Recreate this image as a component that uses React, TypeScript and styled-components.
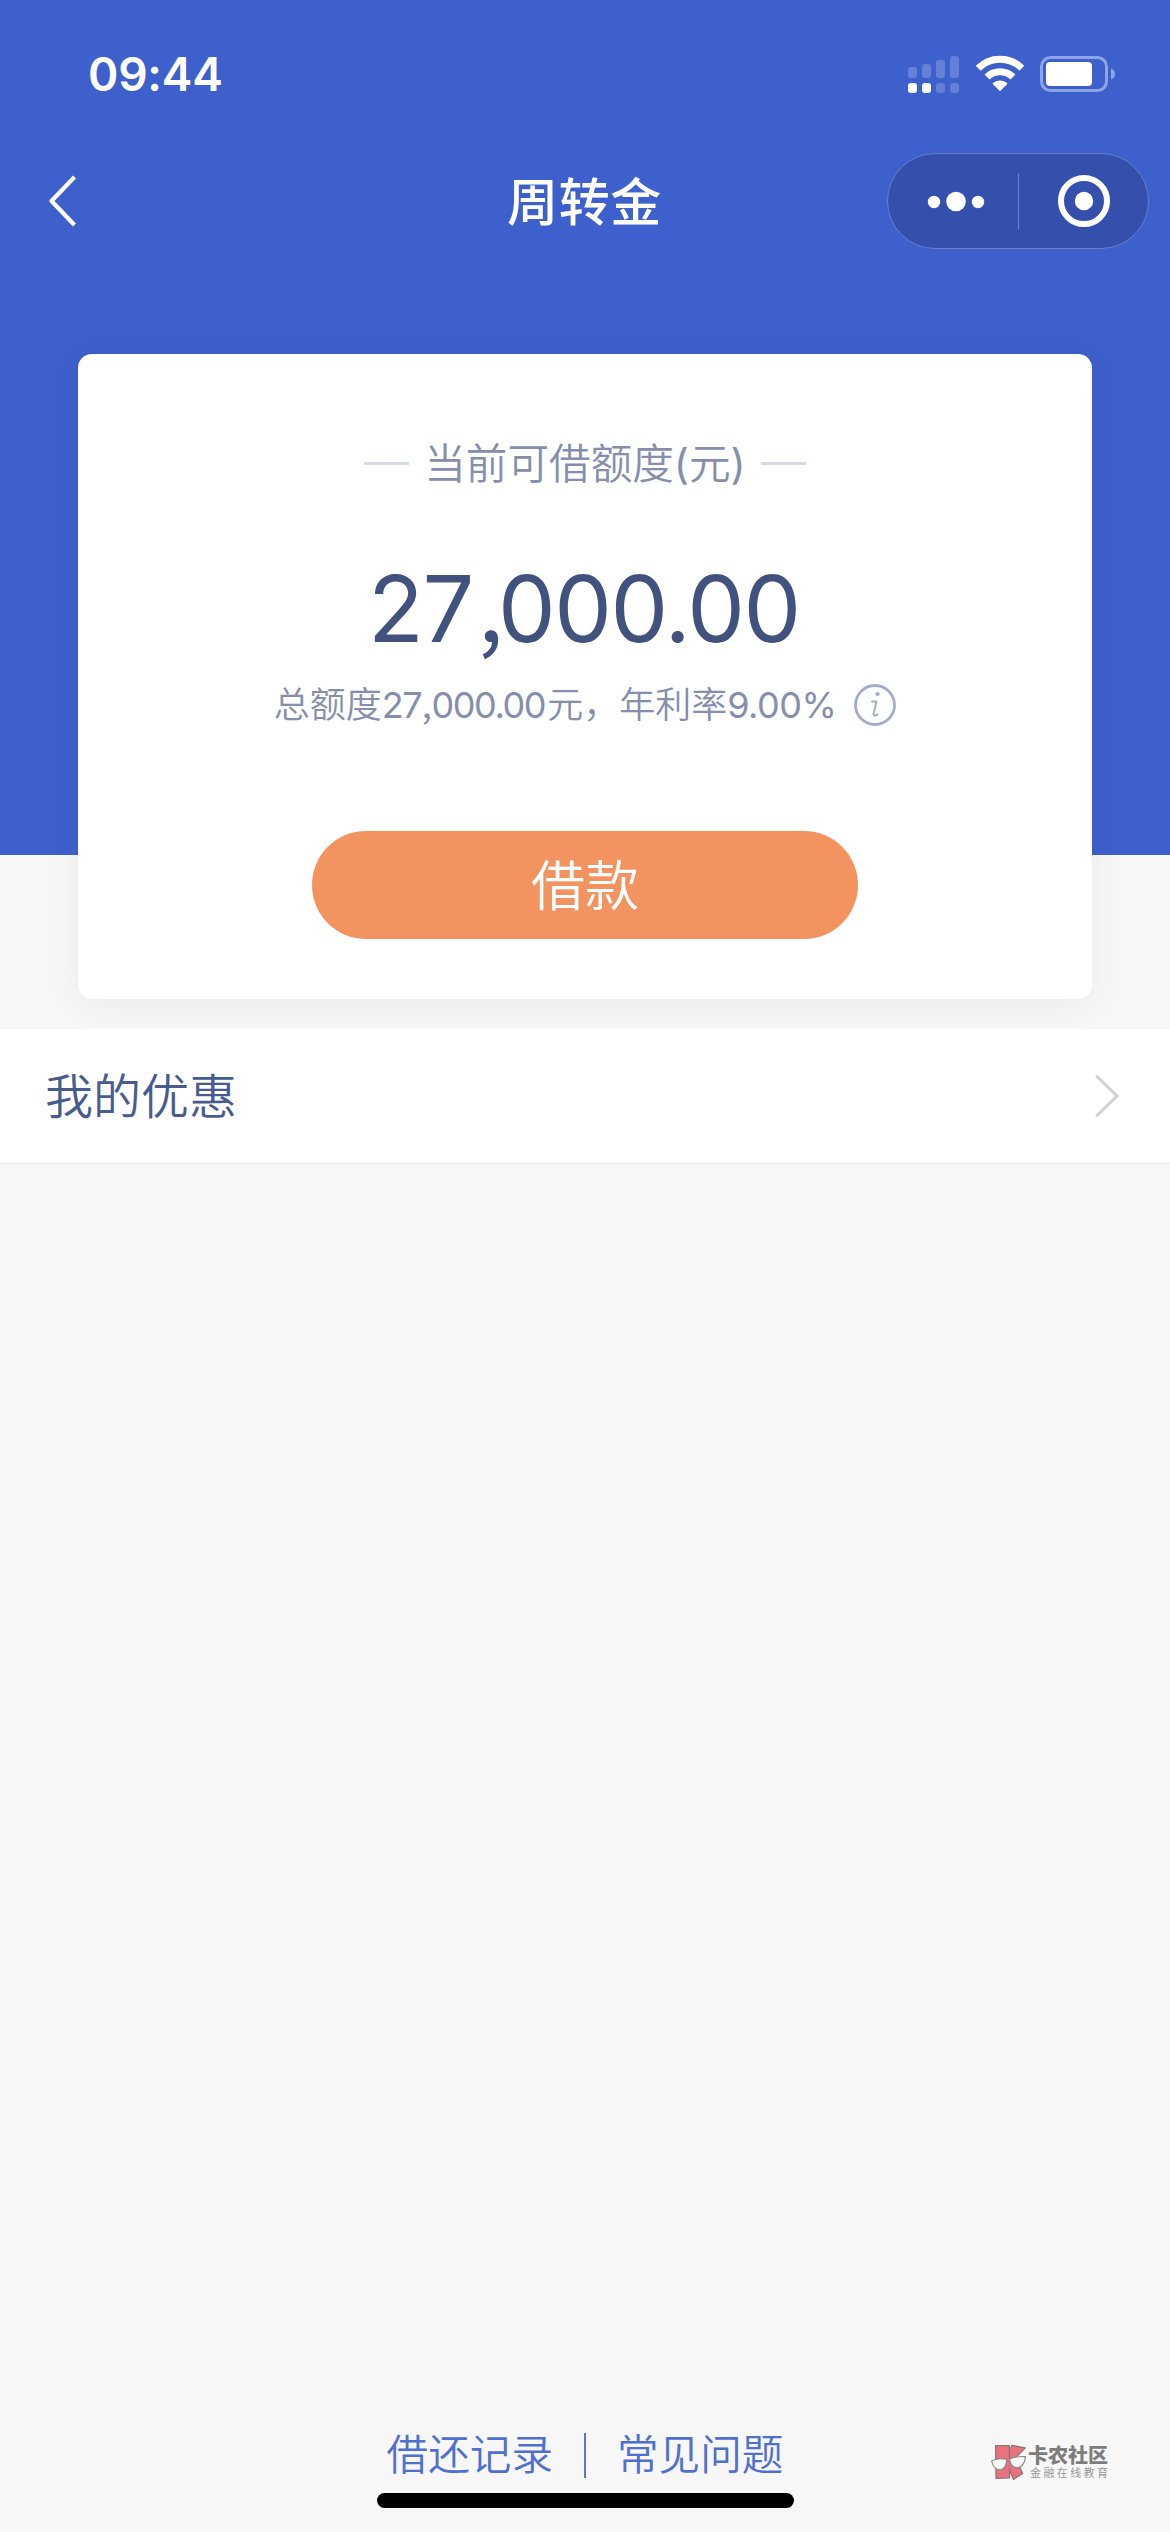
import React from "react";
import styled, { createGlobalStyle } from "styled-components";

const Global = createGlobalStyle`
  *, *::before, *::after { box-sizing: border-box; }
  body {
    margin: 0;
    background: #f7f7f7;
    font-family: Inter, "Noto Sans CJK SC DemiLight", "Noto Sans CJK SC", sans-serif;
  }
  svg { display: block; }
`;

const Screen = styled.div`
  width: 1170px;
  height: 2532px;
  display: flex;
  flex-direction: column;
  background: #f7f7f7;
  overflow: hidden;
`;

const Hero = styled.header`
  flex: none;
  height: 855px;
  background: #3e60cc;
  color: #fff;
`;

const StatusBar = styled.div`
  height: 148px;
  padding: 0 54px 0 88px;
  display: flex;
  justify-content: space-between;
`;

const Clock = styled.span`
  padding-top: 45px;
  font-size: 46px;
  line-height: 58px;
  font-weight: 600;
  letter-spacing: -0.2px;
`;

const StatusIcons = styled.div`
  display: flex;
  gap: 15px;
  padding-top: 54px;
`;

const NavBar = styled.nav`
  height: 106px;
  padding: 0 21px 0 44px;
  display: grid;
  grid-template-columns: 1fr auto 1fr;
  align-items: center;
`;

const BackButton = styled.button`
  justify-self: start;
  padding: 0;
  border: 0;
  background: none;
  color: inherit;
`;

const Title = styled.h1`
  margin: 0;
  padding: 0 24px 4px 0;
  font-family: "Noto Sans CJK SC", sans-serif;
  font-size: 51px;
  line-height: 60px;
  font-weight: 500;
  letter-spacing: 0.6px;
`;

const Capsule = styled.div`
  justify-self: end;
  width: 262px;
  height: 96px;
  border-radius: 48px;
  border: 1px solid #667fce;
  background: #3450ac;
`;

const CreditCard = styled.section`
  flex: none;
  width: 1014px;
  height: 645px;
  margin: -501px auto 0;
  padding-top: 79px;
  display: flex;
  flex-direction: column;
  align-items: center;
  border-radius: 14px;
  background: #fff;
  box-shadow: 0 6px 36px rgba(0, 0, 0, 0.055);
`;

const Caption = styled.div`
  display: flex;
  align-items: center;
  gap: 15px;
  height: 60px;
  font-size: 41.6px;
  color: #858fad;
`;

const CaptionText = styled.span`
  padding-bottom: 4px;
`;

const Dash = styled.i`
  width: 45px;
  height: 3px;
  background: #d3dbe4;
`;

const Amount = styled.div`
  margin-top: 61px;
  padding-right: 2px;
  height: 110px;
  line-height: 110px;
  font-size: 91.5px;
  color: #42527f;
  letter-spacing: -1.4px;
`;

const Comma = styled.span<{ $before: number; $after: number }>`
  margin: 0 ${(p) => p.$after}px 0 ${(p) => p.$before}px;
  font-family: "Noto Sans CJK SC", sans-serif;
  line-height: 1;
`;

const Summary = styled.div`
  margin-top: 16px;
  height: 50px;
  display: flex;
  align-items: center;
  gap: 16px;
  font-size: 36px;
  color: #858fad;
  white-space: nowrap;
`;

const SummaryText = styled.span`
  padding-bottom: 1px;
  line-height: 50px;
`;

const Figure = styled.span<{ $tracking?: number }>`
  margin-right: 2px;
  letter-spacing: ${(p) => p.$tracking ?? -1.4}px;
`;

const BorrowButton = styled.button`
  margin-top: 101px;
  width: 546px;
  height: 108px;
  padding: 0 0 6px;
  border: 0;
  border-radius: 54px;
  background: #f39460;
  color: #fff;
  font-family: inherit;
  font-size: 54px;
`;

const OfferRow = styled.section`
  flex: none;
  position: relative;
  height: 135px;
  margin-top: 30px;
  padding: 0 50px 0 45px;
  display: flex;
  align-items: center;
  justify-content: space-between;
  background: #fff;
  border-bottom: 1px solid #e8e8e8;
  font-size: 48px;
  color: #475c8e;
`;

const OfferLabel = styled.span`
  padding-bottom: 6px;
`;

const Footer = styled.footer`
  margin-top: auto;
  height: 106px;
  display: grid;
  grid-template-columns: 1fr auto 1fr;
  align-items: start;
`;

const FooterCenter = styled.div`
  grid-column: 2;
  display: flex;
  flex-direction: column;
  align-items: center;
`;

const Links = styled.div`
  display: flex;
  align-items: center;
  height: 58px;
  font-size: 41.6px;
  line-height: 58px;
  color: #4f70cf;
`;

const Divider = styled.i`
  width: 2px;
  height: 45px;
  margin: 0 31px;
  background: #5878cd;
`;

const HomeIndicator = styled.div`
  width: 417px;
  height: 15px;
  margin-top: 9px;
  border-radius: 8px;
  background: #000;
`;

const Brand = styled.div`
  grid-column: 3;
  justify-self: end;
  display: flex;
  gap: 1px;
  padding: 18px 62px 0 0;
`;

const BrandText = styled.div`
  display: flex;
  flex-direction: column;
  font-family: "Noto Sans CJK SC", sans-serif;
`;

const BrandName = styled.span`
  font-size: 20px;
  line-height: 22px;
  font-weight: 900;
  color: #7d7d7d;
`;

const BrandTag = styled.span`
  margin-right: -3px;
  padding-left: 2px;
  font-size: 11px;
  line-height: 13px;
  letter-spacing: 2.4px;
  color: #999;
`;

const SignalIcon = () => (
  <svg width="52" height="40" viewBox="0 0 52 40" fill="#fff">
    <g opacity="0.2">
      <rect x="0" y="13" width="9" height="11" rx="3" />
      <rect x="14" y="10" width="9" height="14" rx="3" />
      <rect x="28" y="6" width="9" height="18" rx="3" />
      <rect x="42" y="2" width="9" height="22" rx="3" />
      <rect x="28" y="29" width="9" height="10" rx="3" />
      <rect x="42" y="29" width="9" height="10" rx="3" />
    </g>
    <rect x="0" y="29" width="9" height="10" rx="3" />
    <rect x="14" y="29" width="9" height="10" rx="3" />
  </svg>
);

const WifiIcon = () => (
  <svg width="50" height="40" viewBox="0 0 50 40">
    <g fill="none" stroke="#fff" strokeWidth="7">
      <path d="M3.2 14.2 A31 31 0 0 1 46.8 14.2" />
      <path d="M12 23 A18.6 18.6 0 0 1 38 23" />
    </g>
    <path d="M25 37.2 L18 30.2 Q17.4 29.4 18.2 28.8 Q25 24.4 31.8 28.8 Q32.6 29.4 32 30.2 Z" fill="#fff" />
  </svg>
);

const BatteryIcon = () => (
  <svg width="76" height="40" viewBox="0 0 76 40">
    <rect x="1.5" y="3.5" width="65" height="33" rx="9" fill="none" stroke="#8fa4e4" strokeWidth="3" />
    <rect x="6" y="8" width="46" height="24" rx="4" fill="#fff" />
    <path d="M71 14.5 Q75 16 75 20 Q75 24 71 25.5 Z" fill="#8fa4e4" />
  </svg>
);

const BrandLogo = () => (
  <svg width="36" height="38" viewBox="0 0 36 38" strokeLinejoin="round">
    <g fill="#ea717e" stroke="#8a7474" strokeWidth="1.2">
      <path d="M21 1.3 L34.3 3.9 L24.5 14 L31.7 29.5 L22.3 35.4 L17.7 24 L14 14 Z" />
      <path d="M4.5 1.7 H18.3 L18.6 34 L5 34.3 Z" />
    </g>
    <path d="M17.5 14 L22 14 L22 25 L17.5 23 Z" fill="#ea717e" />
    <g fill="#f7f7f7" stroke="#858585" strokeWidth="1.1">
      <path d="M0.6 17 Q7 13.5 15.7 15.3 Q15.8 24 9.5 26 Q2.5 26 0.6 17 Z" />
      <path d="M18.5 15 Q25 12 34.5 12.6 Q33.5 22 27 23.8 Q20 24 18.5 15 Z" />
    </g>
  </svg>
);

const InfoIcon = () => (
  <svg width="42" height="42" viewBox="0 0 42 42" fill="none" stroke="#a3adc9" strokeLinecap="round">
    <circle cx="21" cy="21" r="19.5" strokeWidth="2.8" />
    <circle cx="23.5" cy="10" r="1.6" fill="#a3adc9" strokeWidth="1" />
    <path d="M18 17.5 H22.5 L19.5 30 Q19.3 32 21.5 31.5 L23.5 30.5" strokeWidth="2" strokeLinejoin="round" />
  </svg>
);

export default function App() {
  return (
    <>
      <Global />
      <Screen>
        <Hero>
          <StatusBar>
            <Clock>09:44</Clock>
            <StatusIcons>
              <SignalIcon />
              <WifiIcon />
              <BatteryIcon />
            </StatusIcons>
          </StatusBar>
          <NavBar>
            <BackButton aria-label="返回">
              <svg width="34" height="56" viewBox="0 0 34 56" fill="none" stroke="#fff" strokeWidth="4.2" strokeLinejoin="round">
                <path d="M30.5 4 L7.5 28 L30.5 52" />
              </svg>
            </BackButton>
            <Title>周转金</Title>
            <Capsule>
              <svg width="260" height="94" viewBox="0 0 260 94" fill="#fff">
                <circle cx="46" cy="48" r="6.2" />
                <circle cx="68" cy="47.5" r="9.8" />
                <circle cx="90" cy="48" r="6.2" />
                <path d="M130.5 19 V75" stroke="#667fce" strokeWidth="1.2" />
                <circle cx="196" cy="47" r="23" fill="none" stroke="#fff" strokeWidth="6" />
                <circle cx="196" cy="47" r="9.2" />
              </svg>
            </Capsule>
          </NavBar>
        </Hero>
        <CreditCard>
          <Caption>
            <Dash />
            <CaptionText>当前可借额度(元)</CaptionText>
            <Dash />
          </Caption>
          <Amount>
            27<Comma $before={5} $after={-4}>,</Comma>000.00
          </Amount>
          <Summary>
            <SummaryText>
              总额度
              <Figure>
                27<Comma $before={0.5} $after={1.2}>,</Comma>000.00
              </Figure>
              元，年利率<Figure $tracking={-0.5}>9.00%</Figure>
            </SummaryText>
            <InfoIcon />
          </Summary>
          <BorrowButton>借款</BorrowButton>
        </CreditCard>
        <OfferRow>
          <OfferLabel>我的优惠</OfferLabel>
          <svg width="26" height="44" viewBox="0 0 26 44" fill="none" stroke="#ced1d8" strokeWidth="3" strokeLinecap="round">
            <path d="M3 2.5 L23 22 L3 41.5" />
          </svg>
        </OfferRow>
        <Footer>
          <FooterCenter>
            <Links>
              <span>借还记录</span>
              <Divider />
              <span>常见问题</span>
            </Links>
            <HomeIndicator />
          </FooterCenter>
          <Brand>
            <BrandLogo />
            <BrandText>
              <BrandName>卡农社区</BrandName>
              <BrandTag>金融在线教育</BrandTag>
            </BrandText>
          </Brand>
        </Footer>
      </Screen>
    </>
  );
}
